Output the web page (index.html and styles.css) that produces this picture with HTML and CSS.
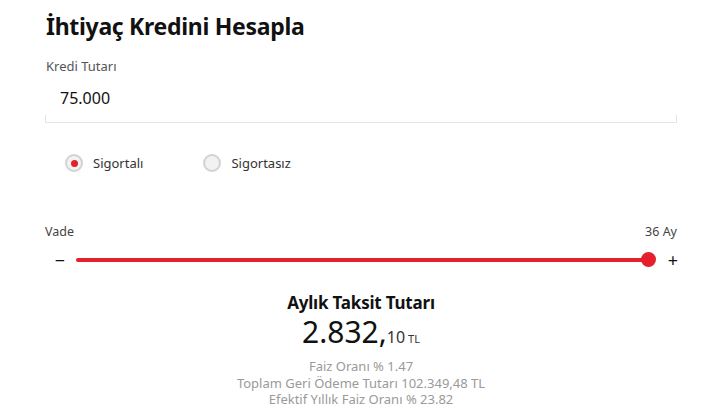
FILE: index.html
```html
<!DOCTYPE html>
<html lang="tr">
<head>
    <meta charset="UTF-8">
    <meta name="viewport" content="width=device-width, initial-scale=1.0">
    <title>İhtiyaç Kredini Hesapla</title>
    <link rel="stylesheet" href="styles.css">
</head>
<body>
    <div class="calc">
        <h1 class="title">İhtiyaç Kredini Hesapla</h1>

        <div class="field">
            <label class="field-label">Kredi Tutarı</label>
            <div class="field-box">
                <span class="field-value">75.000</span>
            </div>
        </div>

        <div class="options">
            <div class="radio checked">
                <span class="radio-dot"></span>
                <span class="radio-text">Sigortalı</span>
            </div>
            <div class="radio">
                <span class="radio-dot"></span>
                <span class="radio-text">Sigortasız</span>
            </div>
        </div>

        <div class="term">
            <div class="term-head">
                <span>Vade</span>
                <span>36 Ay</span>
            </div>
            <div class="slider">
                <span class="slider-btn">&minus;</span>
                <div class="slider-track">
                    <span class="slider-thumb"></span>
                </div>
                <span class="slider-btn">+</span>
            </div>
        </div>

        <div class="result">
            <div class="result-title">Aylık Taksit Tutarı</div>
            <div class="result-amount">2.832,<span class="cents">10</span><span class="currency">TL</span></div>
            <div class="result-info">
                <p>Faiz Oranı % 1.47</p>
                <p>Toplam Geri Ödeme Tutarı 102.349,48 TL</p>
                <p>Efektif Yıllık Faiz Oranı % 23.82</p>
            </div>
        </div>
    </div>
</body>
</html>
```

FILE: styles.css
```css
body {
    margin: 0;
    background-color: #fff;
    font-family: "Noto Sans", "Open Sans", sans-serif;
    color: #111;
}
.calc {
    width: 632px;
    margin-left: 45px;
}
.title {
    margin: 0;
    padding: 10px 0 0 1px;
    font-size: 23px;
    font-weight: 700;
    line-height: 32px;
    letter-spacing: -0.3px;
}
.field {
    margin-top: 16px;
}
.field-label {
    display: block;
    padding-left: 1px;
    font-size: 13px;
    line-height: 16px;
    color: #555;
}
.field-box {
    height: 38px;
    margin-top: 10px;
    padding-left: 15px;
    border-bottom: 1px solid #e4e4e4;
    background:
        linear-gradient(#e4e4e4, #e4e4e4) left bottom / 1px 7px no-repeat,
        linear-gradient(#e4e4e4, #e4e4e4) right bottom / 1px 7px no-repeat;
}
.field-value {
    font-size: 16px;
    line-height: 28px;
    color: #111;
}
.options {
    display: flex;
    gap: 60px;
    margin-top: 31px;
    padding-left: 20px;
}
.radio {
    display: flex;
    align-items: center;
    gap: 10px;
    font-size: 13px;
    color: #333;
}
.radio-dot {
    width: 14px;
    height: 14px;
    border: 2px solid #d2d2d2;
    border-radius: 50%;
    background-color: #f2f2f2;
    display: flex;
    justify-content: center;
    align-items: center;
}
.radio.checked .radio-dot::after {
    content: "";
    width: 7px;
    height: 7px;
    border-radius: 50%;
    background-color: #e3202c;
}
.term {
    margin-top: 52px;
}
.term-head {
    display: flex;
    justify-content: space-between;
    font-size: 12.5px;
    line-height: 16px;
    color: #444;
}
.slider {
    display: flex;
    align-items: center;
    gap: 9px;
    margin-top: 10px;
    margin-right: -3px;
    padding-left: 8px;
}
.slider-btn {
    width: 14px;
    font-size: 18px;
    line-height: 20px;
    text-align: center;
    color: #111;
}
.slider-track {
    flex: 1;
    height: 4px;
    margin-right: 9px;
    background-color: #e3202c;
    border-radius: 2px;
    position: relative;
}
.slider-thumb {
    position: absolute;
    right: -8px;
    top: -6px;
    width: 15px;
    height: 15px;
    border-radius: 50%;
    background-color: #e3202c;
}
.result {
    margin-top: 22px;
    text-align: center;
}
.result-title {
    font-size: 17px;
    font-weight: 700;
    line-height: 22px;
    letter-spacing: -0.2px;
}
.result-amount {
    font-size: 30px;
    line-height: 36px;
}
.cents {
    font-size: 16px;
    color: #333;
}
.currency {
    margin-left: 3px;
    font-size: 11px;
    color: #333;
}
.result-info {
    margin-top: 1px;
    font-size: 13px;
    line-height: 16.5px;
    color: #9a9a9a;
}
.result-info p {
    margin: 0;
}
```
